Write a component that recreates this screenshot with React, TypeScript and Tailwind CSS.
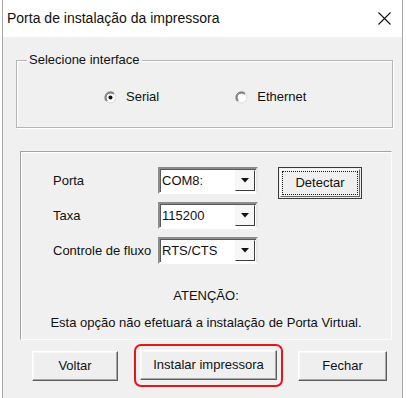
import type { ReactNode } from "react";

const font = { fontFamily: '"Liberation Sans", Arial, sans-serif' };

const Radio = ({ checked, label }: { checked?: boolean; label: string }) => (
  <div className="flex items-center gap-[9px]">
    <svg width="13" height="13" viewBox="0 0 13 13">
      <circle cx="6.5" cy="6.5" r="5.5" fill="#fff" />
      <path d="M2.6 10.4 A5.5 5.5 0 0 1 10.4 2.6" fill="none" stroke="#8a8a8a" strokeWidth="1.3" />
      <path d="M3.3 9.7 A4.5 4.5 0 0 1 9.7 3.3" fill="none" stroke="#505050" strokeWidth="0.9" />
      <path d="M10.4 2.6 A5.5 5.5 0 0 1 2.6 10.4" fill="none" stroke="#e2e2e2" strokeWidth="1.3" />
      {checked && <circle cx="6.5" cy="6.5" r="2" fill="#111" />}
    </svg>
    <span className="text-[13px] text-[#111]">{label}</span>
  </div>
);

const Combo = ({ value }: { value: string }) => (
  <div className="flex h-[27px] w-[100px] items-stretch border-2 border-b-white border-l-[#8c8c8c] border-r-[#e6e6e6] border-t-[#8c8c8c] bg-white shadow-[inset_1px_1px_0_#5a5a5a]">
    <span className="flex flex-1 items-center pl-[2px] text-[13px] text-[#111]">{value}</span>
    <span className="my-[1px] mr-[1px] flex w-[20px] items-center justify-center border border-b-[#3c3c3c] border-l-[#f4f4f4] border-r-[#3c3c3c] border-t-[#f4f4f4] bg-[#f7f7f7]">
      <svg width="8" height="5" viewBox="0 0 8 5">
        <path d="M0 0 H8 L4 4.5 Z" fill="#111" />
      </svg>
    </span>
  </div>
);

const Button = ({ children, w }: { children: ReactNode; w: string }) => (
  <button
    className={`${w} flex h-[30px] items-center justify-center border border-b-[#5e5e5e] border-l-white border-r-[#5e5e5e] border-t-white bg-[#efefef] text-[13px] text-[#111] shadow-[inset_-1px_-1px_0_#a8a8a8,inset_1px_1px_0_#f8f8f8]`}
  >
    {children}
  </button>
);

export default function App() {
  return (
    <div className="flex h-[398px] w-[407px] bg-white" style={font}>
      <div className="ml-[2px] flex h-full w-[401px] flex-col border-x border-x-[#a9a9a9] bg-[#f0f0f0]">
        <div className="flex h-[37px] items-center justify-between bg-white pl-[4px] pr-[11px]">
          <span className="text-[14px] text-[#111]">Porta de instalação da impressora</span>
          <svg width="13" height="13" viewBox="0 0 13 13">
            <path d="M0.5 0.5 L12.5 12.5 M12.5 0.5 L0.5 12.5" stroke="#111" strokeWidth="1.1" />
          </svg>
        </div>

        <div className="relative ml-[13px] mt-[23px] flex h-[68px] w-[377px] items-center border border-[#b5b5b5] shadow-[inset_1px_1px_0_#fff,1px_1px_0_#fff]">
          <span className="absolute left-[10px] top-[-9px] bg-[#f0f0f0] px-[2px] text-[13px] leading-[16px] text-[#111]">
            Selecione interface
          </span>
          <div className="ml-[87px] mt-[6px] flex gap-[76px]">
            <Radio checked label="Serial" />
            <Radio label="Ethernet" />
          </div>
        </div>

        <div className="ml-[17px] mt-[23px] flex h-[189px] w-[372px] flex-col border border-b-[#fbfbfb] border-l-[#a3a3a3] border-r-[#fbfbfb] border-t-[#a3a3a3] shadow-[inset_1px_1px_0_#fdfdfd]">
          <div className="ml-[32px] mt-[15px] flex gap-[20px]">
            <div className="flex flex-col gap-[8px]">
              {[
                ["Porta", "COM8:"],
                ["Taxa", "115200"],
                ["Controle de fluxo", "RTS/CTS"],
              ].map(([label, value]) => (
                <div key={label} className="flex items-center">
                  <span className="w-[105px] text-[13px] text-[#111]">{label}</span>
                  <Combo value={value} />
                </div>
              ))}
            </div>
            <button className="flex h-[32px] w-[84px] items-center justify-center border border-[#3a3a3a] bg-[#efefef] p-[1px] text-[13px] text-[#111]">
              <span className="flex h-full w-full items-center justify-center border border-b-[#6a6a6a] border-l-white border-r-[#6a6a6a] border-t-white p-[1px]">
                <span className="flex h-full w-full items-center justify-center border border-dotted border-[#222]">
                  Detectar
                </span>
              </span>
            </button>
          </div>
          <p className="mt-[24px] text-center text-[13px] leading-[16px] text-[#111]">ATENÇÃO:</p>
          <p className="mt-[11px] text-center text-[13px] leading-[16px] text-[#111]">
            Esta opção não efetuará a instalação de Porta Virtual.
          </p>
        </div>

        <div className="ml-[29px] mt-[4px] flex items-center">
          <Button w="w-[86px]">Voltar</Button>
          <div className="ml-[16px] rounded-[7px] border-2 border-[#e4161b] px-[4px] pb-[5px] pt-[4px]">
            <Button w="w-[137px]">Instalar impressora</Button>
          </div>
          <div className="ml-[15px]">
            <Button w="w-[89px]">Fechar</Button>
          </div>
        </div>
      </div>
    </div>
  );
}
